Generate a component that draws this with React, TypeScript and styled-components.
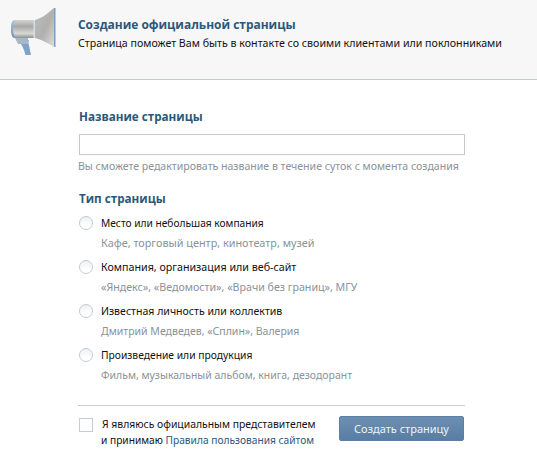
import React from 'react';
import styled, { createGlobalStyle } from 'styled-components';

const Global = createGlobalStyle`
  html, body { margin: 0; padding: 0; background: #fff; }
  body { font-family: "Noto Sans", "Liberation Sans", sans-serif; font-size: 11px; color: #000; }
`;
const Page = styled.div`width: 537px; height: 451px; overflow: hidden; background: #fff;`;
const Header = styled.header`
  height: 80px; box-sizing: border-box; background: #f7f7f7; border-bottom: 1px solid #c5cbcb;
  display: flex; align-items: flex-start; padding: 7px 0 0 8px; gap: 22px;
`;
const HeaderText = styled.div`padding-top: 9px;`;
const Title = styled.h1`margin: 0; font: bold 11.95px/18px "Open Sans", "Noto Sans", sans-serif; color: #2b587a;`;
const Subtitle = styled.p`margin: 0; font-size: 10.65px; line-height: 18px; color: #111; white-space: nowrap;`;
const Form = styled.main`width: 386px; margin-left: 79px; padding-top: 28px;`;
const SectionTitle = styled.h2`margin: 0; font: bold 11.65px/18px "Open Sans", "Noto Sans", sans-serif; color: #2b587a;`;
const NameInput = styled.input`
  display: block; width: 100%; height: 21px; box-sizing: border-box; margin-top: 8px;
  border: 1px solid #c0cad5; background: #fff; outline: none; padding: 0 4px;
`;
const Help = styled.p`margin: 3px 0 0 -1px; font-size: 10.55px; line-height: 16px; color: #8a929a; white-space: nowrap;`;
const TypeBlock = styled.section`margin-top: 16px;`;
const Options = styled.div`margin-top: 7px; display: flex; flex-direction: column;`;
const Option = styled.label`display: grid; grid-template-columns: 22px 1fr; height: 44px; align-items: start;`;
const Radio = styled.span`
  width: 14px; height: 14px; box-sizing: border-box; border: 1px solid #c3cbd4; border-radius: 50%;
  margin-top: 1px; background: linear-gradient(#eef0f3, #fff 70%);
`;
const OptionTitle = styled.div<{ $size: number }>`font-size: ${p => p.$size}px; line-height: 16px; color: #111;`;
const OptionHint = styled.div<{ $size: number }>`margin-top: 4px; font-size: ${p => p.$size}px; line-height: 16px; color: #8a929a;`;
const Divider = styled.hr`margin: 14px 0 0 -1px; border: 0; border-top: 1px solid #c9d0d8; width: 387px;`;
const Footer = styled.footer`display: flex; align-items: flex-start; margin-top: 10px;`;
const Check = styled.span`
  width: 14px; height: 14px; box-sizing: border-box; border: 1px solid #c3cbd4; margin-top: 2px; flex: none;
`;
const Agreement = styled.div`margin-left: 9px; width: 237px; font-size: 10.4px; line-height: 16px; color: #111; white-space: nowrap;`;
const AgreementLine = styled.span`display: block; margin-left: -1px; font-size: 10.2px;`;
const Rules = styled.a`color: #2b587a; text-decoration: none;`;
const Submit = styled.button`
  width: 125px; height: 25px; border: 1px solid #5c7fa3; border-radius: 2px; padding: 0;
  background: linear-gradient(#6d8fb3, #597da3); color: #eef3f7;
  font: 11px "Noto Sans", sans-serif;
`;

const Megaphone = () => (
  <svg width="48" height="50" viewBox="0 0 48 50">
    <defs>
      <linearGradient id="metal" x1="0" y1="0" x2="0" y2="1">
        <stop offset="0" stopColor="#d4d4d2" /><stop offset=".35" stopColor="#a8a8a6" />
        <stop offset=".75" stopColor="#d8d8d6" /><stop offset="1" stopColor="#8e9090" />
      </linearGradient>
      <linearGradient id="bell" x1="0" y1="0" x2="1" y2="1">
        <stop offset="0" stopColor="#bdbdbb" /><stop offset=".55" stopColor="#b0b0ae" /><stop offset="1" stopColor="#dcdcda" />
      </linearGradient>
      <linearGradient id="cap" x1="0" y1="0" x2="0" y2="1">
        <stop offset="0" stopColor="#a9c3dc" /><stop offset="1" stopColor="#6f95bb" />
      </linearGradient>
    </defs>
    <path d="M10 33h11c-.6 1-.6 2-.3 4l2.300 11h-5.500c-1.500-6-3.500-10.500-7.500-15z" fill="#7fa3c6" />
    <path d="M7 31h13v6H10z" fill="#a6b8c8" />
    <path d="M7 13h20v18H7c-3 0-4-4-4-9s1-9 4-9z" fill="url(#metal)" />
    <path d="M7 13c-3 0-4 4-4 9s1 9 4 9c-1-3-2-5-2-9s1-6 2-9z" fill="url(#cap)" />
    <rect x="25.500" y="13" width="2" height="18" fill="#d3e0ec" />
    <path d="M27 13C35 11 41 5 46 1v39c-5-3-11-7-19-9z" fill="url(#bell)" />
    <rect x="46" y="1" width="1.500" height="39" fill="#7d9dbb" />
  </svg>
);

const options = [
  { title: 'Место или небольшая компания', titleSize: 10.2, hint: 'Кафе, торговый центр, кинотеатр, музей', hintSize: 10.85 },
  { title: 'Компания, организация или веб-сайт', titleSize: 10.7, hint: '«Яндекс», «Ведомости», «Врачи без границ», МГУ', hintSize: 10.67 },
  { title: 'Известная личность или коллектив', titleSize: 10.55, hint: 'Дмитрий Медведев, «Сплин», Валерия', hintSize: 10.53 },
  { title: 'Произведение или продукция', titleSize: 10.3, hint: 'Фильм, музыкальный альбом, книга, дезодорант', hintSize: 10.47 },
];

export default function App() {
  return (
    <Page>
      <Global />
      <Header>
        <Megaphone />
        <HeaderText>
          <Title>Создание официальной страницы</Title>
          <Subtitle>Страница поможет Вам быть в контакте со своими клиентами или поклонниками</Subtitle>
        </HeaderText>
      </Header>
      <Form>
        <SectionTitle>Название страницы</SectionTitle>
        <NameInput />
        <Help>Вы сможете редактировать название в течение суток с момента создания</Help>
        <TypeBlock>
          <SectionTitle>Тип страницы</SectionTitle>
          <Options>
            {options.map(o => (
              <Option key={o.title}>
                <Radio />
                <div>
                  <OptionTitle $size={o.titleSize}>{o.title}</OptionTitle>
                  <OptionHint $size={o.hintSize}>{o.hint}</OptionHint>
                </div>
              </Option>
            ))}
          </Options>
        </TypeBlock>
        <Divider />
        <Footer>
          <Check />
          <Agreement>
            Я являюсь официальным представителем
            <AgreementLine>и принимаю <Rules href="#">Правила пользования сайтом</Rules></AgreementLine>
          </Agreement>
          <Submit>Создать страницу</Submit>
        </Footer>
      </Form>
    </Page>
  );
}
